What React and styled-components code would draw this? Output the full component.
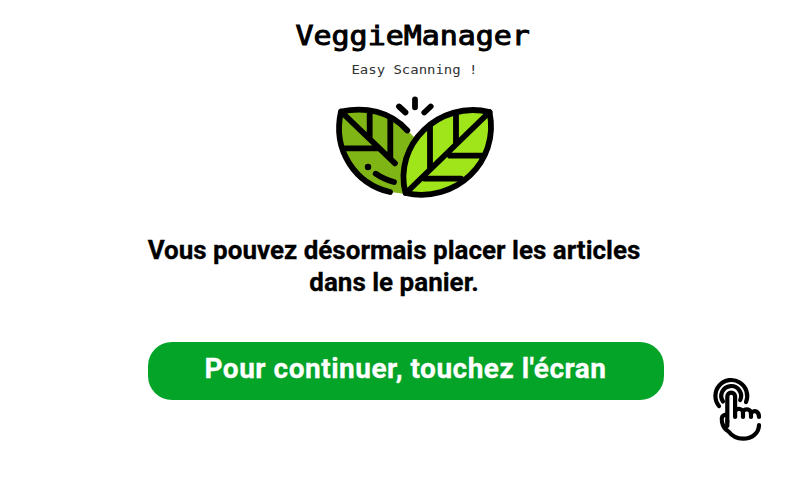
import React from "react";
import styled, { createGlobalStyle } from "styled-components";

const GlobalStyle = createGlobalStyle`
  * { box-sizing: border-box; }
  body { margin: 0; background: #fff; }
`;

const Screen = styled.main`
  position: relative;
  width: 800px;
  height: 480px;
  overflow: hidden;
  background: #fff;
  color: #000;
`;

const Brand = styled.header`
  display: flex;
  flex-direction: column;
  align-items: center;
  padding: 18px 0 0 26px;
  font-family: "DejaVu Sans Mono", monospace;
`;

const BrandName = styled.h1`
  margin: 0;
  font-size: 27px;
  transform: scaleX(1.108);
  line-height: 36px;
  font-weight: 400;
  -webkit-text-stroke: 1px #000;
`;

const Tagline = styled.p`
  margin: 8px 0 0 3px;
  font-size: 12.5px;
  transform: scaleX(1.116);
  line-height: 16px;
  color: #333;
`;

const LeafLogo = styled.svg`
  display: block;
  width: 170px;
  height: 114px;
  margin: 12px 0 0 4px;
`;

const Message = styled.p`
  width: 516px;
  margin: 30px 0 0 136px;
  font: 700 26px/32px Roboto, sans-serif;
  text-align: center;
  white-space: nowrap;
  -webkit-text-stroke: 0.3px #000;
`;

const ContinueButton = styled.button`
  display: flex;
  justify-content: center;
  width: 516px;
  height: 58px;
  margin: 44px 0 0 148px;
  padding: 10px 1px 0 0;
  border: 0;
  border-radius: 24px;
  background: #04a428;
  color: #fff;
  font: 700 28px/33px Roboto, sans-serif;
  letter-spacing: 0.5px;
  white-space: nowrap;
  -webkit-text-stroke: 0.3px #fff;
`;

const TouchIcon = styled.svg`
  position: absolute;
  left: 710px;
  top: 374px;
  width: 54px;
  height: 70px;
`;

export default function App() {
  return (
    <Screen>
      <GlobalStyle />
      <Brand>
        <BrandName>VeggieManager</BrandName>
        <Tagline>Easy Scanning !</Tagline>
        <LeafLogo viewBox="330 90 170 114" fill="none" stroke="#000" strokeWidth="5.8" strokeLinecap="round" strokeLinejoin="round">
          <path d="M341 111.5C363 107 388 110 414 137L406 194L390 192C356 184 332 151 341 111.5Z" fill="#80b516" stroke="none" />
          <path d="M407.3 130.5C390 111 365 106.5 341 111.5C332 151 356 184 390 192M341 111.5L395 163.3M369.7 112V138.5M390.3 119V158M343 148.3H378" />
          <path d="M375.7 173.7Q384 179.5 394 182" />
          <circle cx="368" cy="167" r="3.2" fill="#000" stroke="none" />
          <path d="M489.5 112C439 100 393 145 405.5 193C455 204 500 162 489.5 112Z" fill="#a0e51a" />
          <path d="M489.5 112L406 193M430 126V169M456 113V143M450 155.7H483M425 178.7H461" />
          <path d="M415 99.3V107.3M399 106.5L405.5 112.5M430.7 106.5L424.3 112.5" />
        </LeafLogo>
      </Brand>
      <Message>Vous pouvez désormais placer les articles<br />dans le panier.</Message>
      <ContinueButton>Pour continuer, touchez l'écran</ContinueButton>
      <TouchIcon viewBox="710 374 54 70" fill="none" stroke="#000" strokeWidth="4.2" strokeLinecap="round" strokeLinejoin="round">
        <path d="M719 406A15.9 15.9 0 1 1 746 402" />
        <path d="M723 401.5A9.9 9.9 0 1 1 740.2 400" />
        <path d="M727.3 422V396.5A3.9 3.9 0 0 1 735.1 396.5V417" />
        <path d="M735.1 411C737 408 743 408 743 413V417M743 411C746 408 751 409 751 414V417M751 413C755 409 759 412 759 417" />
        <path d="M727 414.5C722 415 721 417 722 422C723 427 726 430 728.5 431.5C732 436 738 438.7 743 438.7C752 438.7 759 433 759 425M727.3 421V426" />
      </TouchIcon>
    </Screen>
  );
}
